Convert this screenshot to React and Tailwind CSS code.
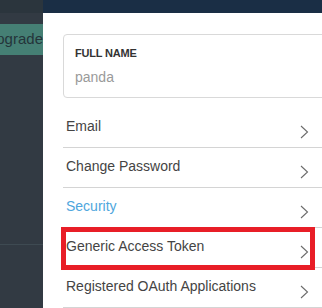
import { ChevronRight } from 'lucide-react'

const rows = [
  { label: 'Email' },
  { label: 'Change Password' },
  { label: 'Security', active: true },
  { label: 'Generic Access Token', marked: true },
  { label: 'Registered OAuth Applications' },
]

function Chevron() {
  return (
    <svg width="9" height="14" viewBox="0 0 9 14" className="mt-[8px] shrink-0">
      <path d="M1 1 L7.5 7 L1 13" fill="none" stroke="#6b6b6b" strokeWidth="1.1" />
    </svg>
  )
}

export default function App() {
  return (
    <div
      className="flex h-[308px] w-[322px] overflow-hidden bg-white"
      style={{ fontFamily: '"Liberation Sans", Arial, sans-serif' }}
    >
      {/* Sidebar behind the modal */}
      <div className="relative flex w-[43px] shrink-0 flex-col bg-[#323a43]">
        <div className="h-[13px] bg-[#2b353d]" />
        <div className="mt-[11px] flex h-[31px] items-center justify-end overflow-hidden bg-[#457f74] text-[15px] text-[#24343a]">
          <span className="whitespace-nowrap">pgrade</span>
        </div>
        <div className="mt-[189px] h-px w-full bg-[#3e4a52]" />
      </div>

      {/* Settings panel */}
      <div className="flex flex-1 flex-col">
        <div className="h-[13px] bg-[#1a2e45]" />
        <div className="flex flex-col pl-[20px]">
          <div className="mt-[21px] -mr-[10px] h-[64px] rounded-[4px] border border-[#d9d9d9] px-[11px] pt-[12px]">
            <div className="text-[11px] font-bold leading-[13px] tracking-[-0.2px] text-[#333]">FULL NAME</div>
            <div className="mt-[9px] text-[14px] leading-[17px] text-[#9a9a9a]">panda</div>
          </div>

          <div className="mt-[10px] flex flex-col">
            {rows.map((r) => (
              <div
                key={r.label}
                className="relative flex h-[40px] items-center justify-between border-b border-[#d4d4d4] pl-[3px] pr-[13px]"
              >
                <span className={`pb-[3px] text-[14px] ${r.active ? 'text-[#4ea6dd]' : 'text-[#444]'}`}>
                  {r.label}
                </span>
                <Chevron />
                {r.marked && (
                  <div className="absolute -top-px left-[-2px] h-[43px] w-[254px] border-[5px] border-[#e81e27]" />
                )}
              </div>
            ))}
          </div>
        </div>
      </div>
    </div>
  )
}
